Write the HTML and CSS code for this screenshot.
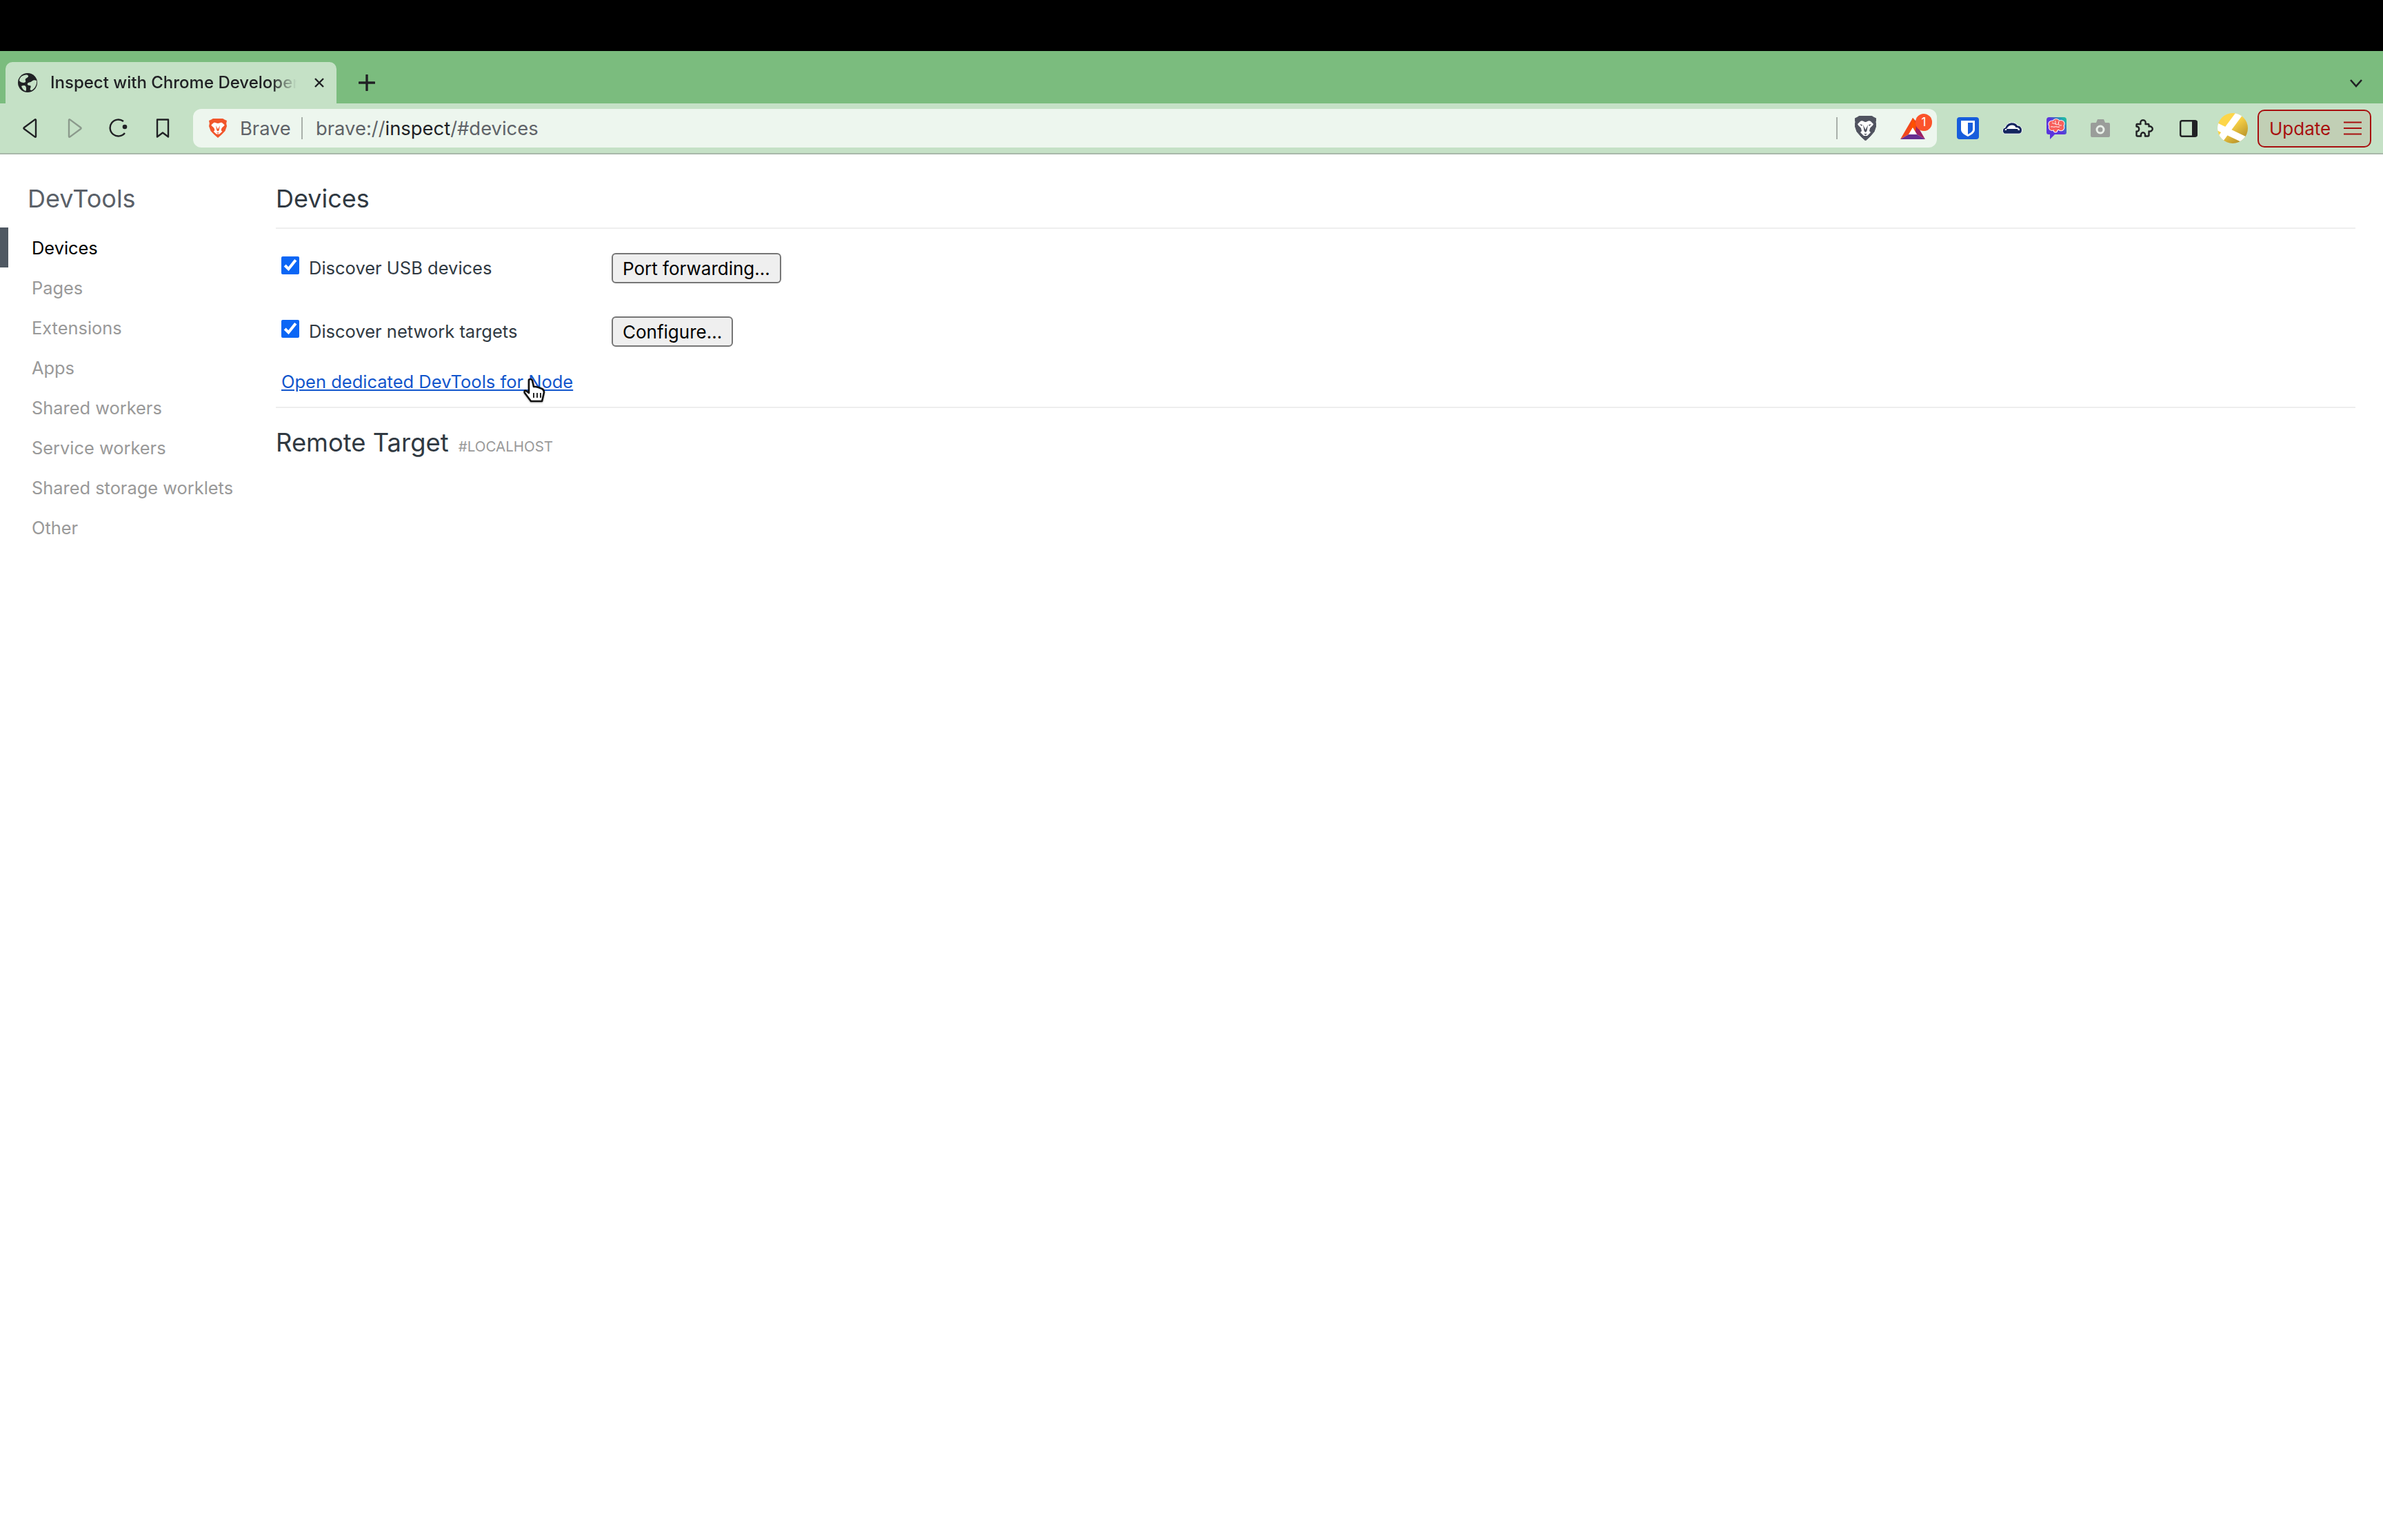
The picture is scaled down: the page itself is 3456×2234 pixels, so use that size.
FILE: index.html
```html
<!DOCTYPE html>
<html lang="en">
<head>
<meta charset="utf-8">
<title>Inspect with Chrome Developer Tools</title>
<link rel="stylesheet" href="styles.css">
</head>
<body>
<div class="menubar"></div>
<div class="tabstrip">
  <div class="tab">
    <svg class="favicon" viewBox="0 0 28 28"><circle cx="14" cy="14" r="14" fill="#202124"/><path d="M5 5c3-2 7-3 9-2 2 1 1 3-1 4-2 1-3 2-2 4 1 2-1 3-3 3-2 0-5-1-6-3 0-2 1-4 3-6zM27 11c-2-1-5-1-7 1-2 2-5 1-6 3-1 2 1 3 3 3 2 0 2 2 1 4-1 2 0 3 2 3 4-2 8-8 7-14zM9 18c2 0 3 2 3 4s0 4-1 4c-3-1-5-4-6-7 1-1 3-1 4-1z" fill="#c5e1c6"/></svg>
    <span class="tab-title">Inspect with Chrome Developer Tools</span>
    <svg class="tab-close" viewBox="0 0 18 14"><path d="M3 1l12 12M15 1l-12 12" stroke="#202124" stroke-width="2.400" fill="none"/></svg>
  </div>
  <svg class="tab-new" viewBox="0 0 24 24"><path d="M12 1v22M1 12h22" stroke="#202124" stroke-width="3.400" stroke-linecap="round" fill="none"/></svg>
  <svg class="tab-search" viewBox="0 0 20 12"><path d="M2 1l8 9 8-9" stroke="#202124" stroke-width="2.600" fill="none"/></svg>
</div>
<div class="toolbar">
  <svg class="nav-icon back" viewBox="0 0 22 28"><path d="M19 2v24c0 .8-.7 1-1.300.6L2 15c-.8-.6-.8-1.400 0-2L17.700 1.400C18.300 1 19 1.200 19 2z" fill="none" stroke="#202124" stroke-width="2.400" stroke-linejoin="round"/></svg>
  <svg class="nav-icon forward" viewBox="0 0 22 28"><path d="M3 2v24c0 .8.7 1 1.300.6L20 15c.8-.6.8-1.400 0-2L4.300 1.400C3.700 1 3 1.200 3 2z" fill="none" stroke="#8b9a8c" stroke-width="2.400" stroke-linejoin="round"/></svg>
  <svg class="nav-icon reload" viewBox="0 0 28 28"><path d="M24 21a12 12 0 1 1-2-17" fill="none" stroke="#202124" stroke-width="2.400"/><circle cx="24" cy="12" r="3.300" fill="#202124"/></svg>
  <svg class="nav-icon bookmark" viewBox="0 0 20 28"><path d="M2 1.500h16v25l-8-6-8 6z" fill="none" stroke="#202124" stroke-width="2.400" stroke-linejoin="round"/></svg>
  <div class="omnibox">
    <svg class="shield" viewBox="0 0 31 36" preserveAspectRatio="none"><path d="M7 0H24L27 2 31 4 30 9 31 14 28 23 22 30 15.500 36 9 30 3 23 0 14 1 9 0 4 4 2Z" fill="#f1562b"/><path d="M8 8C11 6 13 9 15.500 9 18 9 20 6 23 8L27 12C26 15 24 15 22 18L21 22 23 24 18 29H13L8 24 10 22 9 18C7 15 5 15 4 12Z" fill="#fff"/><path d="M12 13L15.500 20 19 13 17.500 22 15.500 24 13.500 22ZM13 26h5l-2.500 2z" fill="#f1562b"/></svg>
    <span class="site-name">Brave</span>
    <span class="omni-sep"></span>
    <span class="url">brave://<b class="url-host">inspect</b>/#devices</span>
    <span class="omni-sep right"></span>
    <svg class="ext lion" viewBox="0 0 31 36"><path d="M7 0H24L27 2 31 4 30 9 31 14 28 23 22 30 15.500 36 9 30 3 23 0 14 1 9 0 4 4 2Z" fill="#50535f" stroke="#50535f" stroke-width="1" stroke-linejoin="round"/><path d="M8 8C11 6 13 9 15.500 9 18 9 20 6 23 8L27 12C26 15 24 15 22 18L21 22 23 24 18 29H13L8 24 10 22 9 18C7 15 5 15 4 12Z" fill="#fff"/><path d="M12 13L15.500 20 19 13 17.500 22 15.500 24 13.500 22ZM13 26h5l-2.500 2zM7 12l4 1-1 2zM24 12l-4 1 1 2z" fill="#50535f"/></svg>
    <div class="ext bat">
      <svg class="bat-logo" viewBox="0 0 36 31"><path d="M18 0L0 31 12 24 18 14 21 16 23 5z" fill="#f2471c"/><path d="M18 0L36 31 24 24 18 14z" fill="#9e1f63"/><path d="M18 0L12 24 18 14 22 20 23 9z" fill="#ff5000"/><path d="M18 14L24 24H12z" fill="#fff"/><path d="M0 31L12 24H24L36 31z" fill="#662d91"/></svg>
      <span class="badge">1</span>
    </div>
  </div>
  <svg class="ext bitwarden" viewBox="0 0 32 32"><rect width="32" height="32" rx="4" fill="#175ddc"/><path d="M6 5h20v13c0 5-6 8-10 10-4-2-10-5-10-10z" fill="#fff"/><path d="M16 8h7v10c0 3-4 5-7 7z" fill="#175ddc"/></svg>
  <svg class="ext cloud" viewBox="0 0 30 18"><path d="M3.500 17C.5 14 .5 9.500 5 8 7 3 11 .8 15 .8c4 0 6.500 1.700 8 4.200 4 0 6.500 3.500 6.500 7 0 3-2 5.200-4.500 5.200H5z" fill="#14265f" stroke="#fff" stroke-width="1"/><path d="M4.500 12c0-1.500 1-2.500 3-2.500C9 6 12 4.500 15 4.500c3 0 4.800 1.300 5.500 3.500 3.500-.5 5.800 1.500 5.500 4z" fill="#fff"/><rect x="7" y="10" width="16.500" height="5.500" rx="1" fill="#14265f"/></svg>
  <svg class="ext brain" viewBox="0 0 29 32"><defs><linearGradient id="chat" x1="0" y1="1" x2="1" y2="0"><stop offset="0.550" stop-color="#5b35dc"/><stop offset="0.900" stop-color="#1fb7a6"/></linearGradient></defs><path d="M4 0h21a4 4 0 0 1 4 4v18a3 3 0 0 1-3 3H12l-7 7v-7H3a3 3 0 0 1-3-3V4a4 4 0 0 1 4-4z" fill="url(#chat)"/><g fill="#fff"><circle cx="8" cy="10" r="5.600"/><circle cx="14" cy="8" r="6"/><circle cx="21" cy="9.500" r="5.600"/><circle cx="21" cy="15" r="5.300"/><circle cx="14" cy="14" r="6"/><circle cx="8" cy="15" r="5"/><circle cx="13" cy="19" r="3.400"/></g><g fill="#f8605c"><circle cx="8" cy="10" r="4.600"/><circle cx="14" cy="8" r="5"/><circle cx="21" cy="9.500" r="4.600"/><circle cx="21" cy="15" r="4.300"/><circle cx="14" cy="14" r="5"/><circle cx="8" cy="15" r="4"/><circle cx="13" cy="19" r="2.400"/></g><path d="M8 8c2 2 3 0 5 2s3-1 5 1 3 0 4 1M6 14c3-1 4 1 6 0s4 1 7 0M13 5c-1 2 1 3 0 5M18 6c-1 1 0 3-1 4" stroke="#fff" stroke-width="1" fill="none"/></svg>
  <svg class="ext camera" viewBox="0 0 28 26"><path d="M2 5h6l2-5h9l2 5h5a2 2 0 0 1 2 2v17a2 2 0 0 1-2 2H2a2 2 0 0 1-2-2V7a2 2 0 0 1 2-2z" fill="#9a9d9a"/><circle cx="14" cy="15" r="6.500" fill="#e8efe8"/><circle cx="14" cy="15" r="3.500" fill="#9a9d9a"/></svg>
  <svg class="ext puzzle" viewBox="0 0 27 26"><path d="M3.500 7H8.500C7.500 3 9.500 1.200 12 1.200S16.500 3 15.500 7H19.500a1 1 0 0 1 1 1V10.500C23 9.500 25.800 11.500 25.800 14S23 18 20.500 17.500V23a1.500 1.500 0 0 1-1.500 1.500H15C15.500 21 14 19.200 12 19.200S8.500 21 9 24.500H4A1.500 1.500 0 0 1 2.500 23V17.500C5 18 6.200 16 6.200 14S5 10.500 2.500 10.500V8a1 1 0 0 1 1-1Z" fill="none" stroke="#202124" stroke-width="2.400" stroke-linejoin="round"/></svg>
  <svg class="ext panel" viewBox="0 0 26 25"><rect x="1.200" y="1.200" width="23.600" height="22.600" rx="2.500" fill="none" stroke="#202124" stroke-width="2.400"/><rect x="18" y="1" width="7.500" height="23" rx="1" fill="#202124"/></svg>
  <svg class="ext avatar" viewBox="0 0 44 44"><defs><linearGradient id="gold" x1="0.200" y1="0.100" x2="0.800" y2="0.900"><stop offset="0.350" stop-color="#fdd649"/><stop offset="1" stop-color="#b9942a"/></linearGradient><clipPath id="round"><circle cx="22" cy="22" r="22"/></clipPath></defs><circle cx="22" cy="22" r="22" fill="url(#gold)"/><g clip-path="url(#round)" stroke="#fff" stroke-width="10" fill="none"><path d="M33-1L4 38"/><path d="M-2 19L42 40"/></g></svg>
  <button class="update" type="button">Update
    <svg class="update-menu" viewBox="0 0 26 20"><path d="M0 1.500h26M0 10h26M0 18.500h26" stroke="#a80f0f" stroke-width="2" fill="none"/></svg>
  </button>
</div>
<div class="toolbar-rule"></div>
<main class="page">
  <nav class="sidebar">
    <h1 class="side-title">DevTools</h1>
    <ul class="side-list">
      <li class="side-item active">Devices</li>
      <li class="side-item">Pages</li>
      <li class="side-item">Extensions</li>
      <li class="side-item">Apps</li>
      <li class="side-item">Shared workers</li>
      <li class="side-item">Service workers</li>
      <li class="side-item">Shared storage worklets</li>
      <li class="side-item">Other</li>
    </ul>
  </nav>
  <section class="content">
    <h2 class="heading devices-heading">Devices</h2>
    <div class="option first">
      <label class="option-label"><input type="checkbox" class="check" checked>Discover USB devices</label>
      <button class="action" type="button">Port forwarding...</button>
    </div>
    <div class="option second">
      <label class="option-label"><input type="checkbox" class="check" checked>Discover network targets</label>
      <button class="action" type="button">Configure...</button>
    </div>
    <div class="node-row"><a class="node-link" href="#node">Open dedicated DevTools for Node</a></div>
    <h2 class="heading remote-heading">Remote Target <span class="host">#LOCALHOST</span></h2>
  </section>
</main>
<svg class="cursor" viewBox="0 0 32 35"><path d="M8 2c2-2 4-1 5 1l2 9 3 0 4 1 5 2c2 1 3 3 3 5l-2 9-1 4H11L8 29 2 21c-1-2 0-4 2-3l4 3z" fill="#fff" stroke="#111" stroke-width="2.600" stroke-linejoin="round"/><path d="M15 21v7M20 21v7M25 21v7" stroke="#111" stroke-width="1.800"/></svg>
</body>
</html>
```
FILE: styles.css
```css
* { box-sizing: border-box; }
html, body { margin: 0; padding: 0; }
body {
  width: 3456px;
  height: 2234px;
  overflow: hidden;
  position: relative;
  background: #fff;
  font-family: Inter, "Liberation Sans", sans-serif;
  color: #202124;
}
.menubar { height: 74px; background: #000; }
.tabstrip {
  height: 76px;
  background: #7bbc7e;
  display: flex;
  align-items: flex-end;
  padding-left: 8px;
  position: relative;
}
.tab {
  width: 480px;
  height: 60px;
  background: #c5e1c6;
  border-radius: 10px 10px 0 0;
  display: flex;
  align-items: center;
  padding: 0 15px 0 18px;
}
.favicon { width: 28px; height: 28px; flex: none; }
.tab-title {
  width: 357px;
  margin-left: 19px;
  font-size: 24px;
  font-weight: 500;
  line-height: 30px;
  white-space: nowrap;
  overflow: hidden;
  -webkit-mask-image: linear-gradient(to right, #000 90%, transparent);
  mask-image: linear-gradient(to right, #000 90%, transparent);
}
.tab-close { width: 18px; height: 14px; margin-left: 24px; flex: none; }
.tab-new { width: 24px; height: 24px; margin-left: 32px; margin-bottom: 18px; flex: none; }
.tab-search { position: absolute; left: 3407px; top: 41px; width: 20px; height: 12px; }
.toolbar {
  height: 72px;
  background: #c5e1c6;
  display: flex;
  align-items: center;
  padding-left: 33px;
}
.toolbar-rule { height: 2px; background: #a8b8a9; }
.nav-icon { flex: none; height: 28px; }
.back { width: 22px; }
.forward { width: 22px; margin-left: 42px; }
.reload { width: 28px; margin-left: 38px; }
.bookmark { width: 20px; margin-left: 41px; }
.omnibox {
  width: 2529px;
  height: 56px;
  margin-left: 34px;
  background: #edf6ee;
  border-radius: 12px;
  display: flex;
  align-items: center;
  padding-left: 23px;
  flex: none;
}
.shield { width: 26px; height: 28px; flex: none; }
.site-name { margin-left: 19px; font-size: 27.300px; color: #5f6368; width: 73px; }
.omni-sep { width: 2px; height: 32px; background: #a9b0aa; margin-left: 16px; flex: none; }
.url { margin-left: 19px; font-size: 27.400px; color: #5f6368; white-space: nowrap; width: 2208px; }
.url-host { font-weight: 400; color: #202124; }
.omni-sep.right { margin-left: -3px; }
.ext { flex: none; }
.lion { width: 31px; height: 36px; margin-left: 25px; }
.bat { width: 48px; height: 40px; margin-left: 35px; position: relative; }
.bat-logo { position: absolute; left: 0; top: 5px; width: 36px; height: 31px; }
.badge {
  position: absolute;
  left: 22px;
  top: -1px;
  width: 24px;
  height: 25px;
  border-radius: 12px;
  background: #fb542b;
  color: #fff;
  font-size: 17px;
  line-height: 25px;
  text-align: center;
}
.bitwarden { width: 32px; height: 32px; margin-left: 29px; }
.cloud { width: 30px; height: 18px; margin-left: 33px; }
.brain { width: 29px; height: 32px; margin-left: 35px; }
.camera { width: 28px; height: 26px; margin-left: 35px; }
.puzzle { width: 27px; height: 26px; margin-left: 36px; }
.panel { width: 26px; height: 25px; margin-left: 38px; }
.avatar { width: 44px; height: 44px; margin-left: 29px; }
.update {
  width: 165px;
  height: 55px;
  margin-left: 14px;
  border: 2px solid #a80f0f;
  border-radius: 10px;
  background: #c1cfb5;
  color: #a80f0f;
  font-family: inherit;
  font-size: 26px;
  display: flex;
  align-items: center;
  padding: 0 12px 0 15px;
  justify-content: space-between;
}
.update-menu { width: 26px; height: 20px; }
.page { display: flex; align-items: flex-start; }
.sidebar { width: 400px; flex: none; padding-top: 41px; }
.side-title {
  margin: 0 0 0 40px;
  font-size: 36px;
  line-height: 46px;
  font-weight: 400;
  color: #5a6068;
}
.side-list { list-style: none; margin: 19px 0 0; padding: 0; }
.side-item {
  height: 58px;
  line-height: 60px;
  padding-left: 46px;
  font-size: 25.400px;
  color: #999;
}
.side-item.active { color: #000; border-left: 12px solid #4f5862; padding-left: 34px; }
.content { flex: none; width: 3016px; padding-top: 41px; }
.heading {
  margin: 0;
  font-size: 36px;
  line-height: 46px;
  font-weight: 400;
  color: #303942;
}
.devices-heading { padding-bottom: 19px; border-bottom: 2px solid #eee; }
.option { display: flex; align-items: center; height: 44px; padding-left: 8px; }
.option.first { margin-top: 35px; }
.option.second { margin-top: 48px; }
.option-label { width: 479px; display: flex; align-items: center; font-size: 25.500px; color: #303942; margin-bottom: 2px; }
.check { width: 26px; height: 26px; margin: -6px 14px 0 0; accent-color: #0b66f5; flex: none; }
.action {
  height: 44px;
  padding: 0 14px;
  border: 2px solid #767676;
  border-radius: 6px;
  background: #efefef;
  color: #000;
  font-family: inherit;
  font-size: 26px;
}
.node-row { margin-top: 34px; padding: 0 0 10px 8px; border-bottom: 2px solid #eee; height: 55px; }
.node-link { font-size: 25.500px; color: #1155cc; line-height: 34px; }
.remote-heading { margin-top: 27px; font-size: 36.400px; }
.host { font-size: 20.500px; color: #999; margin-left: 4px; }
.cursor { position: absolute; left: 759px; top: 549px; width: 32px; height: 35px; filter: drop-shadow(0 1px 1px rgba(0, 0, 0, 0.3)); }
```
